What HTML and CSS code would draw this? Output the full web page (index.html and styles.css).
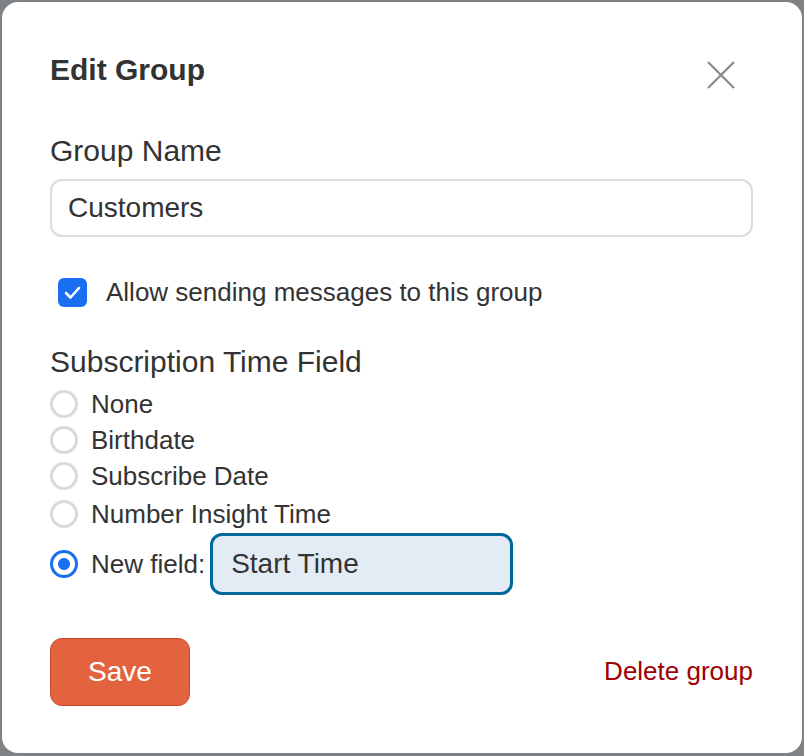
FILE: index.html
```html
<!DOCTYPE html>
<html>
<head>
<meta charset="utf-8">
<link rel="stylesheet" href="styles.css">
</head>
<body>
<div class="dialog">
  <div class="header">
    <h1 class="title">Edit Group</h1>
    <button class="close" aria-label="Close">
      <svg width="30" height="30" viewBox="0 0 30 30"><path d="M2 2 L28 28 M28 2 L2 28" stroke="#8a8a8a" stroke-width="2.2" fill="none"/></svg>
    </button>
  </div>
  <label class="label">Group Name</label>
  <div class="input">Customers</div>
  <div class="check-row">
    <span class="checkbox">
      <svg width="29" height="29" viewBox="0 0 29 29"><path d="M8 15 L12.5 19.5 L21 10" stroke="#fff" stroke-width="2.6" fill="none" stroke-linecap="round" stroke-linejoin="round"/></svg>
    </span>
    <span class="check-label">Allow sending messages to this group</span>
  </div>
  <div class="section">Subscription Time Field</div>
  <div class="radios">
    <div class="radio-row"><span class="radio"></span><span class="radio-label">None</span></div>
    <div class="radio-row"><span class="radio"></span><span class="radio-label">Birthdate</span></div>
    <div class="radio-row"><span class="radio"></span><span class="radio-label">Subscribe Date</span></div>
    <div class="radio-row fourth"><span class="radio"></span><span class="radio-label">Number Insight Time</span></div>
    <div class="radio-row last"><span class="radio checked"></span><span class="radio-label">New field:</span><div class="field-input">Start Time</div></div>
  </div>
  <div class="footer">
    <button class="save">Save</button>
    <a class="delete">Delete group</a>
  </div>
</div>
</body>
</html>
```
FILE: styles.css
```css
html, body {
  margin: 0;
  padding: 0;
  background: #808385;
  height: 756px;
  overflow: hidden;
}
.dialog {
  box-sizing: border-box;
  margin: 2px 0 0 2px;
  width: 800px;
  height: 751px;
  background: #fff;
  border-radius: 16px;
  padding: 50px 50px 0 48px;
  color: #333;
  font-family: "Liberation Sans", Arial, sans-serif;
}
.header {
  display: flex;
  justify-content: space-between;
  align-items: center;
  height: 36px;
}
.title {
  margin: 0;
  font-weight: bold;
  font-size: 30px;
  line-height: 36px;
  color: #333;
}
.close {
  border: 0;
  background: none;
  padding: 0;
  margin: 9px 16px 0 0;
  width: 30px;
  height: 30px;
  display: block;
}
.close svg { display: block; }
.label {
  display: block;
  margin-top: 45px;
  font-size: 30px;
  line-height: 36px;
}
.input {
  box-sizing: border-box;
  margin-top: 10px;
  height: 58px;
  width: 703px;
  border: 2px solid #dcdcdc;
  border-radius: 12px;
  padding: 0 16px;
  display: flex;
  align-items: center;
  font-size: 28px;
}
.check-row {
  display: flex;
  align-items: center;
  height: 29px;
  margin-top: 41px;
  padding-left: 8px;
}
.checkbox {
  width: 29px;
  height: 29px;
  border-radius: 6px;
  background: #1a6ef2;
  display: block;
}
.checkbox svg { display: block; }
.check-label {
  margin-left: 19px;
  font-size: 26px;
  line-height: 29px;
}
.section {
  margin-top: 38px;
  font-size: 30px;
  line-height: 34px;
}
.radios {
  margin-top: 7px;
}
.radio-row {
  display: flex;
  align-items: center;
  height: 36px;
}
.radio-row.fourth {
  height: 38px;
  padding-top: 2px;
  box-sizing: border-box;
}
.radio-row.last {
  height: 62px;
  margin-top: 1px;
}
.radio {
  box-sizing: border-box;
  width: 28px;
  height: 28px;
  border-radius: 50%;
  border: 3px solid #dadada;
  background: #fff;
  flex: none;
}
.radio.checked {
  border-color: #1a6ef2;
  background: radial-gradient(circle, #1a6ef2 0 5.5px, #fff 6.5px);
}
.radio-label {
  margin-left: 13px;
  font-size: 26px;
  line-height: 36px;
}
.field-input {
  box-sizing: border-box;
  margin-left: 5px;
  width: 303px;
  height: 62px;
  border: 3px solid #00679b;
  border-radius: 12px;
  background: #e3ebf5;
  padding: 0 18px;
  display: flex;
  align-items: center;
  font-size: 28px;
}
.footer {
  display: flex;
  justify-content: space-between;
  align-items: center;
  margin-top: 43px;
  width: 703px;
}
.save {
  box-sizing: border-box;
  width: 140px;
  height: 68px;
  background: #e3633f;
  border: 1px solid #c6472b;
  border-radius: 12px;
  color: #fff;
  font-family: "Liberation Sans", Arial, sans-serif;
  font-size: 28px;
  padding: 0;
}
.delete {
  color: #a00000;
  font-size: 26px;
  margin-top: -1px;
}
```
